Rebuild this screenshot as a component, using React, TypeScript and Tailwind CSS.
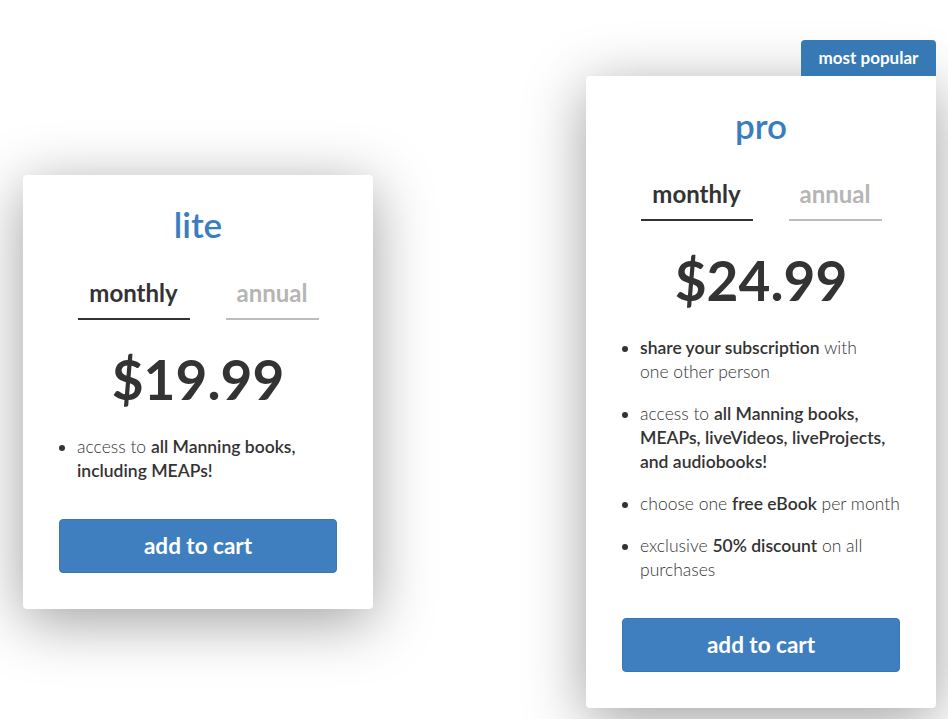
import React from "react";

type Plan = {
  name: string;
  price: string;
  popular?: boolean;
  features: React.ReactNode[];
};

const B = ({ children }: { children: React.ReactNode }) => (
  <b className="font-semibold">{children}</b>
);

const plans: Plan[] = [
  {
    name: "lite",
    price: "$19.99",
    features: [
      <>
        access to <B>all Manning books, including MEAPs!</B>
      </>,
    ],
  },
  {
    name: "pro",
    price: "$24.99",
    popular: true,
    features: [
      <>
        <B>share your subscription</B> with
        <br />
        one other person
      </>,
      <>
        access to{" "}
        <B>all Manning books, MEAPs, liveVideos, liveProjects, and audiobooks!</B>
      </>,
      <>
        choose one <B>free eBook</B> per month
      </>,
      <>
        exclusive <B>50% discount</B> on all purchases
      </>,
    ],
  },
];

function Card({ plan }: { plan: Plan }) {
  return (
    <div className="relative w-[350px] shrink-0">
      {plan.popular && (
        <div className="absolute bottom-full right-0 flex h-[36px] w-[135px] items-center justify-center rounded-t-[4px] bg-[#3679b5] text-[17px] font-bold text-white">
          most popular
        </div>
      )}
      <div
        className={`flex flex-col items-center bg-white px-[36px] pb-[36px] pt-[29px] shadow-[0_12px_60px_rgba(0,0,0,0.38)] ${
          plan.popular ? "rounded-b-[4px] rounded-tl-[4px]" : "rounded-[4px]"
        }`}
      >
        <h2 className="text-[35px] font-semibold leading-[40px] text-[#3a7dc0]">
          {plan.name}
        </h2>
        <div className="mt-[34px] flex gap-[36px]">
          <div className="w-[112px] border-b-2 border-[#333333] pb-[10px] text-center text-[24px] font-bold leading-[30px] text-[#333333]">
            monthly
          </div>
          <div className="w-[93px] border-b-2 border-[#bdbdbd] pb-[10px] text-center text-[24px] font-bold leading-[30px] text-[#b5b5b5]">
            annual
          </div>
        </div>
        <div className="mt-[27px] text-[55px] font-bold leading-[64px] text-[#333333]">
          {plan.price}
        </div>
        <ul className="mt-[24px] flex w-full list-disc flex-col gap-[18px] pl-[18px] text-[17.5px] font-light leading-[24px] text-[#333333]">
          {plan.features.map((f, i) => (
            <li key={i}>{f}</li>
          ))}
        </ul>
        <button className="mt-[36px] h-[54px] w-full shrink-0 rounded-[4px] border border-[#3a76b4] bg-[#3f7fc0] text-[22.5px] font-bold text-white">
          add to cart
        </button>
      </div>
    </div>
  );
}

export default function App() {
  return (
    <div className="flex h-[719px] w-[948px] items-center gap-[213px] overflow-hidden bg-white pl-[23px] pt-[65px] font-['Lato',_sans-serif]">
      {plans.map((p) => (
        <Card key={p.name} plan={p} />
      ))}
    </div>
  );
}
